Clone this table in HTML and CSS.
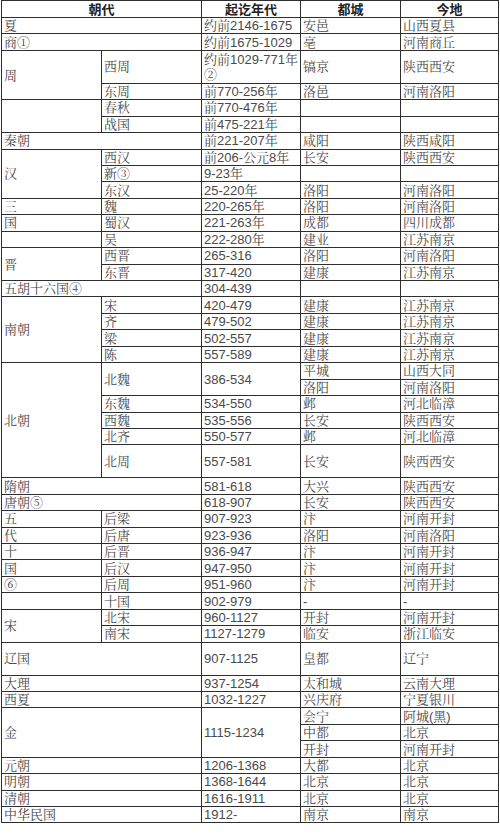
FILE: index.html
```html
<!DOCTYPE html>
<html lang="zh-CN">
<head>
<meta charset="utf-8">
<title>中国历代朝代表</title>
<link rel="stylesheet" href="styles.css">
</head>
<body>
<table class="dyn">
<colgroup><col class="c1"><col class="c2"><col class="c3"><col class="c4"><col class="c5"></colgroup>
<thead>
<tr class="hd"><th colspan="2">朝代</th><th>起讫年代</th><th>都城</th><th>今地</th></tr>
</thead>
<tbody>
<tr><td colspan="2">夏</td><td>约前2146-1675</td><td>安邑</td><td>山西夏县</td></tr>
<tr><td colspan="2">商①</td><td>约前1675-1029</td><td>亳</td><td>河南商丘</td></tr>
<tr class="u2"><td rowspan="2">周</td><td>西周</td><td>约前1029-771年②</td><td>镐京</td><td>陕西西安</td></tr>
<tr><td>东周</td><td>前770-256年</td><td>洛邑</td><td>河南洛阳</td></tr>
<tr><td rowspan="2"></td><td>春秋</td><td>前770-476年</td><td></td><td></td></tr>
<tr><td>战国</td><td>前475-221年</td><td></td><td></td></tr>
<tr><td colspan="2">秦朝</td><td>前221-207年</td><td>咸阳</td><td>陕西咸阳</td></tr>
<tr><td rowspan="3">汉</td><td>西汉</td><td>前206-公元8年</td><td>长安</td><td>陕西西安</td></tr>
<tr><td>新③</td><td>9-23年</td><td></td><td></td></tr>
<tr><td>东汉</td><td>25-220年</td><td>洛阳</td><td>河南洛阳</td></tr>
<tr><td>三</td><td>魏</td><td>220-265年</td><td>洛阳</td><td>河南洛阳</td></tr>
<tr><td>国</td><td>蜀汉</td><td>221-263年</td><td>成都</td><td>四川成都</td></tr>
<tr><td></td><td>吴</td><td>222-280年</td><td>建业</td><td>江苏南京</td></tr>
<tr><td rowspan="2">晋</td><td>西晋</td><td>265-316</td><td>洛阳</td><td>河南洛阳</td></tr>
<tr><td>东晋</td><td>317-420</td><td>建康</td><td>江苏南京</td></tr>
<tr><td colspan="2">五胡十六国④</td><td>304-439</td><td></td><td></td></tr>
<tr><td rowspan="4">南朝</td><td>宋</td><td>420-479</td><td>建康</td><td>江苏南京</td></tr>
<tr><td>齐</td><td>479-502</td><td>建康</td><td>江苏南京</td></tr>
<tr><td>梁</td><td>502-557</td><td>建康</td><td>江苏南京</td></tr>
<tr><td>陈</td><td>557-589</td><td>建康</td><td>江苏南京</td></tr>
<tr><td rowspan="6">北朝</td><td rowspan="2">北魏</td><td rowspan="2">386-534</td><td>平城</td><td>山西大同</td></tr>
<tr><td>洛阳</td><td>河南洛阳</td></tr>
<tr><td>东魏</td><td>534-550</td><td>邺</td><td>河北临漳</td></tr>
<tr><td>西魏</td><td>535-556</td><td>长安</td><td>陕西西安</td></tr>
<tr><td>北齐</td><td>550-577</td><td>邺</td><td>河北临漳</td></tr>
<tr class="u2"><td>北周</td><td>557-581</td><td>长安</td><td>陕西西安</td></tr>
<tr><td colspan="2">隋朝</td><td>581-618</td><td>大兴</td><td>陕西西安</td></tr>
<tr><td colspan="2">唐朝⑤</td><td>618-907</td><td>长安</td><td>陕西西安</td></tr>
<tr><td>五</td><td>后梁</td><td>907-923</td><td>汴</td><td>河南开封</td></tr>
<tr><td>代</td><td>后唐</td><td>923-936</td><td>洛阳</td><td>河南洛阳</td></tr>
<tr><td>十</td><td>后晋</td><td>936-947</td><td>汴</td><td>河南开封</td></tr>
<tr><td>国</td><td>后汉</td><td>947-950</td><td>汴</td><td>河南开封</td></tr>
<tr><td>⑥</td><td>后周</td><td>951-960</td><td>汴</td><td>河南开封</td></tr>
<tr><td></td><td>十国</td><td>902-979</td><td>-</td><td>-</td></tr>
<tr><td rowspan="2">宋</td><td>北宋</td><td>960-1127</td><td>开封</td><td>河南开封</td></tr>
<tr><td>南宋</td><td>1127-1279</td><td>临安</td><td>浙江临安</td></tr>
<tr class="u2"><td colspan="2">辽国</td><td>907-1125</td><td>皇都</td><td>辽宁</td></tr>
<tr><td colspan="2">大理</td><td>937-1254</td><td>太和城</td><td>云南大理</td></tr>
<tr><td colspan="2">西夏</td><td>1032-1227</td><td>兴庆府</td><td>宁夏银川</td></tr>
<tr><td colspan="2" rowspan="3">金</td><td rowspan="3">1115-1234</td><td>会宁</td><td>阿城(黑)</td></tr>
<tr><td>中都</td><td>北京</td></tr>
<tr><td>开封</td><td>河南开封</td></tr>
<tr><td colspan="2">元朝</td><td>1206-1368</td><td>大都</td><td>北京</td></tr>
<tr><td colspan="2">明朝</td><td>1368-1644</td><td>北京</td><td>北京</td></tr>
<tr><td colspan="2">清朝</td><td>1616-1911</td><td>北京</td><td>北京</td></tr>
<tr><td colspan="2">中华民国</td><td>1912-</td><td>南京</td><td>南京</td></tr>
</tbody>
</table>
</body>
</html>
```
FILE: styles.css
```css
html, body {
  margin: 0;
  padding: 0;
  background: #ffffff;
}

.dyn {
  margin: 0 0 0 1px;
  width: 497px;
  table-layout: fixed;
  border-collapse: collapse;
  font-family: "Liberation Sans", "Noto Serif CJK SC", "Noto Sans CJK SC", sans-serif;
  font-size: 13px;
  line-height: 15px;
  color: #4a4a4a;
}

.c1 { width: 100px; }
.c2 { width: 100px; }
.c3 { width: 99px; }
.c4 { width: 100px; }
.c5 { width: 98px; }

.dyn th,
.dyn td {
  border: 1px solid #2e2e2e;
  padding: 0 2px;
  vertical-align: middle;
  text-align: left;
  overflow: hidden;
}

.dyn tr { height: 16.45px; }
.dyn tr.hd { height: 17px; }
.dyn tr.u2 { height: 32.9px; }

.dyn th {
  font-family: "Liberation Sans", "Noto Sans CJK SC", sans-serif;
  font-weight: bold;
  font-size: 13px;
  color: #222222;
  text-align: center;
}
```
